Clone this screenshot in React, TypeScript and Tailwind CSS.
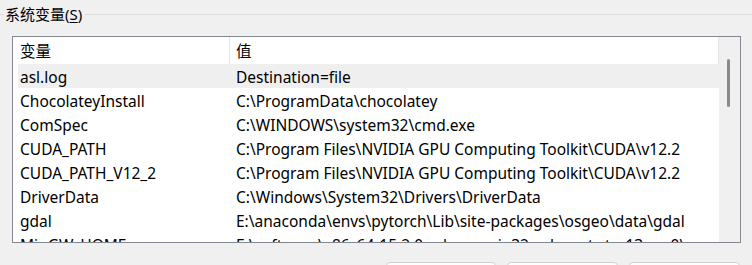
import React from 'react';

const rows = [
  { name: 'asl.log', value: 'Destination=file' },
  { name: 'ChocolateyInstall', value: 'C:\\ProgramData\\chocolatey' },
  { name: 'ComSpec', value: 'C:\\WINDOWS\\system32\\cmd.exe' },
  { name: 'CUDA_PATH', value: 'C:\\Program Files\\NVIDIA GPU Computing Toolkit\\CUDA\\v12.2' },
  { name: 'CUDA_PATH_V12_2', value: 'C:\\Program Files\\NVIDIA GPU Computing Toolkit\\CUDA\\v12.2' },
  { name: 'DriverData', value: 'C:\\Windows\\System32\\Drivers\\DriverData' },
  { name: 'gdal', value: 'E:\\anaconda\\envs\\pytorch\\Lib\\site-packages\\osgeo\\data\\gdal' },
  { name: 'MinGW_HOME', value: 'E:\\software\\x86_64-15.2.0-release-win32-seh-ucrt-rt_v13-rev0\\' },
];

export default function App() {
  return (
    <div
      className="w-[752px] h-[265px] bg-[#f0f0f0] overflow-hidden text-[15.5px] text-black"
      style={{ fontFamily: '"Noto Sans", "Noto Sans CJK SC", sans-serif' }}
    >
      {/* Group header */}
      <div className="flex items-center h-[28px]">
        <div className="w-[4px] h-px bg-[#dcdcdc]" />
        <span className="px-[1px] leading-[20px] whitespace-nowrap text-[15px]">
          系统变量(<span className="underline underline-offset-2">S</span>)
        </span>
        <div className="flex-1 h-px bg-[#dcdcdc] ml-[2px]" />
      </div>

      {/* List */}
      <div className="ml-[12px] mt-[8px] w-[729px] h-[207px] border border-[#828790] bg-white flex overflow-hidden">
        <div className="flex-1 pl-[5px] flex flex-col">
          <div className="shrink-0 flex h-[27px] border-r border-[#e5e5e5]">
            <div className="w-[212px] pl-[2px] pt-[2px] h-full flex items-center border-r border-[#e5e5e5]">变量</div>
            <div className="flex-1 pl-[6px] pt-[2px] flex items-center">值</div>
          </div>
          {rows.map((row, i) => (
            <div
              key={row.name}
              className={`shrink-0 flex h-[24px] pt-[3px] items-center whitespace-nowrap ${i === 0 ? 'bg-[#efefef]' : ''}`}
            >
              <div className="w-[212px] pl-[2px]">{row.name}</div>
              <div className="flex-1 pl-[6px] overflow-hidden">{row.value}</div>
            </div>
          ))}
        </div>
        <div className="w-[21px] h-full bg-[#f0f0f0] pt-[22px] pl-[8px]">
          <div className="w-[3px] h-[48px] rounded-full bg-[#8a8a8a]" />
        </div>
      </div>

      {/* Buttons */}
      <div className="flex justify-end gap-[11px] mt-[19px] pr-[12px]">
        <div className="w-[110px] h-[28px] rounded-[4px] border border-[#d0d0d0] bg-[#fdfdfd]" />
        <div className="w-[111px] h-[28px] rounded-[4px] border border-[#d0d0d0] bg-[#fdfdfd]" />
        <div className="w-[111px] h-[28px] rounded-[4px] border border-[#d0d0d0] bg-[#fdfdfd]" />
      </div>
    </div>
  );
}
